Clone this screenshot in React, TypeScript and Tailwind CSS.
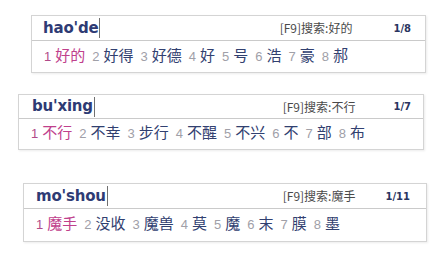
import React from "react";

type Box = {
  py: string;
  cands: string[];
  hint: string;
  page: string;
};

const boxes: Box[] = [
  { py: "hao'de", cands: ["好的", "好得", "好德", "好", "号", "浩", "豪", "郝"], hint: "好的", page: "1/8" },
  { py: "bu'xing", cands: ["不行", "不幸", "步行", "不醒", "不兴", "不", "部", "布"], hint: "不行", page: "1/7" },
  { py: "mo'shou", cands: ["魔手", "没收", "魔兽", "莫", "魔", "末", "膜", "墨"], hint: "魔手", page: "1/11" },
];

const cjk = { fontFamily: '"Noto Sans CJK SC", "Noto Sans", sans-serif' } as const;

function Candidates({ cands }: { cands: string[] }) {
  return (
    <div className="flex items-center h-full pl-[12px] gap-[7px]" style={cjk}>
      {cands.map((c, i) => (
        <div key={i} className="flex items-baseline">
          <span
            className={
              i === 0
                ? "text-[13px] text-[#b04a8a] mr-[4px] font-['Liberation_Sans']"
                : "text-[13px] text-[#a0a0a8] mr-[4px] font-['Liberation_Sans']"
            }
          >
            {i + 1}
          </span>
          <span
            className={
              i === 0
                ? "text-[15px] leading-none text-[#c0408c]"
                : "text-[15px] leading-none text-[#314070]"
            }
          >
            {c}
          </span>
        </div>
      ))}
    </div>
  );
}

function Header({ b, pl, hintMr, pr }: { b: Box; pl: string; hintMr: string; pr: string }) {
  return (
    <div className={`flex items-center h-full ${pl} ${pr}`}>
      <span className="text-[15px] font-bold text-[#2e3b74] font-['DejaVu_Sans'] tracking-[-0.2px]">{b.py}</span>
      <span className="w-px h-[20px] bg-[#707070] ml-[1px]" />
      <span className={`ml-auto text-[12px] text-[#4a4a4a] ${hintMr}`} style={cjk}>
        [F9]搜索:{b.hint}
      </span>
      <span className="text-[10px] font-bold text-[#2a3560] font-['DejaVu_Sans']">{b.page}</span>
    </div>
  );
}

export default function App() {
  return (
    <div className="w-[446px] h-[255px] bg-white flex flex-col overflow-hidden">
      <div className="ml-[31px] mt-[15px] w-[395px] h-[58px] border border-[#d4d4d4] shadow-[1px_1px_2px_rgba(0,0,0,0.08)] flex flex-col bg-white">
        <div className="h-[25px] border-b border-[#cacaca]">
          <Header b={boxes[0]} pl="pl-[11px]" hintMr="mr-[41px]" pr="pr-[14px]" />
        </div>
        <div className="flex-1">
          <Candidates cands={boxes[0].cands} />
        </div>
      </div>

      <div className="ml-[18px] mt-[21px] w-[406px] h-[56px] border border-[#d4d4d4] shadow-[1px_1px_2px_rgba(0,0,0,0.08)] flex flex-col bg-white">
        <div className="h-[24px] border-b border-[#cacaca]">
          <Header b={boxes[1]} pl="pl-[13px]" hintMr="mr-[38px]" pr="pr-[12px]" />
        </div>
        <div className="flex-1">
          <Candidates cands={boxes[1].cands} />
        </div>
      </div>

      <div className="ml-[23px] mt-[33px] w-[404px] h-[59px] border border-[#d4d4d4] shadow-[1px_1px_2px_rgba(0,0,0,0.08)] flex flex-col bg-white">
        <div className="h-[25px] border-b border-[#cacaca]">
          <Header b={boxes[2]} pl="pl-[12px]" hintMr="mr-[30px]" pr="pr-[16px]" />
        </div>
        <div className="flex-1">
          <Candidates cands={boxes[2].cands} />
        </div>
      </div>
    </div>
  );
}
